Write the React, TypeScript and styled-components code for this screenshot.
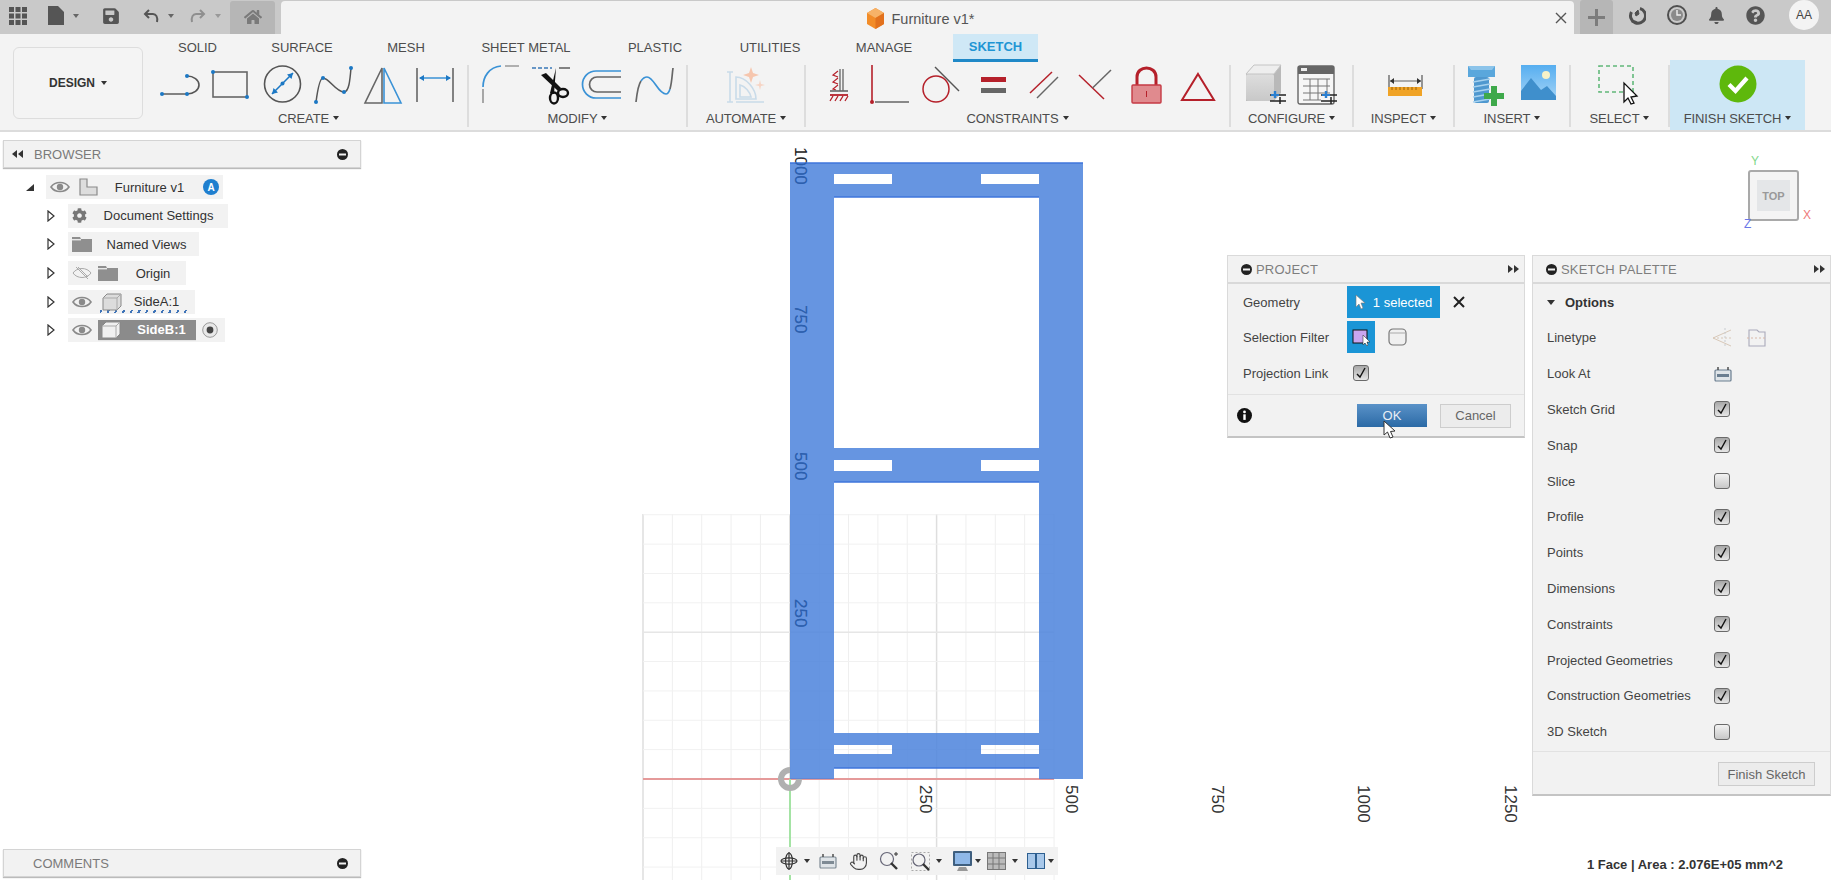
import React from "react";
import styled, { createGlobalStyle } from "styled-components";
import { FaBell, FaCog, FaHome, FaQuestionCircle, FaSave } from "react-icons/fa";
import { Hand } from "lucide-react";

const Global = createGlobalStyle`
    html, body { margin: 0; padding: 0; background: #fff; }
    body { font-family: "Liberation Sans", Arial, sans-serif; color: #444; overflow: hidden; }
    * { box-sizing: border-box; }
`;

const Page = styled.div`
    width: 1831px;
    height: 880px;
    display: flex;
    flex-direction: column;
    overflow: hidden;
`;

/* ---------- title bar ---------- */

const TitleBar = styled.div`
    height: 34px;
    flex: none;
    display: flex;
    background: #c9c9c9;
`;

const QuickTools = styled.div`
    width: 281px;
    flex: none;
    display: flex;
    align-items: center;
    padding: 0 6px 3px 0;
    color: #555;
`;

const QuickSlot = styled.div<{ $w: number; $dim?: boolean }>`
    width: ${(p) => p.$w}px;
    flex: none;
    height: 100%;
    display: flex;
    align-items: center;
    justify-content: center;
    gap: 9px;
    color: ${(p) => (p.$dim ? "#8f8f8f" : "#555")};
`;

const HomeTab = styled.div`
    width: 45px;
    height: 33px;
    margin: 3px 0 0 6px;
    flex: none;
    display: flex;
    align-items: center;
    justify-content: center;
    background: #b6b6b6;
    color: #7a7a7a;
    font-size: 18px;
    border-radius: 3px 3px 0 0;
`;

const Caret = styled.span<{ $color?: string; $size?: number }>`
    display: inline-block;
    width: 0;
    height: 0;
    flex: none;
    border-left: ${(p) => p.$size ?? 3}px solid transparent;
    border-right: ${(p) => p.$size ?? 3}px solid transparent;
    border-top: ${(p) => (p.$size ?? 3) + 1}px solid ${(p) => p.$color ?? "#333"};
`;

const DocTab = styled.div`
    width: 1293px;
    flex: none;
    margin-top: 1px;
    display: flex;
    align-items: center;
    padding: 0 7px 0 5px;
    background: #f3f3f3;
    border-radius: 4px 4px 0 0;
`;

const DocTitle = styled.div`
    margin: 2px auto 0;
    display: flex;
    align-items: center;
    gap: 6px;
    font-size: 14.5px;
    color: #555;
`;

const CloseMark = styled.span`
    display: flex;
    color: #555;
`;

const PlusTab = styled.div`
    width: 33px;
    flex: none;
    margin-left: 6px;
    display: flex;
    align-items: center;
    justify-content: center;
    background: #b6b6b6;
    border-radius: 3px 3px 0 0;
`;

const UserTools = styled.div`
    flex: 1;
    display: flex;
    align-items: center;
    padding: 0 0 4px 15px;
    gap: 21px;
    color: #555;
`;

const Avatar = styled.div`
    width: 30px;
    height: 30px;
    margin-left: 3px;
    border-radius: 50%;
    background: #f3f3f3;
    display: flex;
    align-items: center;
    justify-content: center;
    font-size: 12px;
    color: #444;
`;

/* ---------- ribbon ---------- */

const Ribbon = styled.div`
    height: 98px;
    flex: none;
    display: flex;
    background: #f3f3f3;
    border-bottom: 2px solid #dcdcdc;
`;

const DesignColumn = styled.div`
    width: 145px;
    flex: none;
    padding: 13px 2px 0 13px;
`;

const DesignButton = styled.div`
    height: 72px;
    display: flex;
    align-items: center;
    justify-content: center;
    gap: 6px;
    padding-bottom: 1px;
    border: 1px solid #dddddd;
    border-radius: 6px;
    background: #f4f4f4;
    font-size: 12px;
    font-weight: bold;
    color: #333;
`;

const RibbonMain = styled.div`
    flex: 1;
    display: flex;
    flex-direction: column;
`;

const TabRow = styled.div`
    height: 28px;
    flex: none;
    display: flex;
`;

const RibbonTab = styled.div<{ $w: number; $active?: boolean }>`
    width: ${(p) => p.$w}px;
    flex: none;
    display: flex;
    align-items: center;
    justify-content: center;
    font-size: 13px;
    padding-bottom: ${(p) => (p.$active ? "0" : "1px")};
    color: ${(p) => (p.$active ? "#1e95d4" : "#4c4c4c")};
    font-weight: ${(p) => (p.$active ? "bold" : "normal")};
    background: ${(p) => (p.$active ? "#cfe8f6" : "transparent")};
    border-bottom: ${(p) => (p.$active ? "3px solid #1f88c7" : "none")};
    margin-left: ${(p) => (p.$active ? "9px" : "0")};
`;

const PanelRow = styled.div`
    flex: 1;
    display: flex;
    align-items: flex-start;
    padding-left: 5px;
`;

const Section = styled.div<{ $w: number; $finish?: boolean }>`
    width: ${(p) => p.$w}px;
    height: ${(p) => (p.$finish ? "70px" : "62px")};
    margin-top: ${(p) => (p.$finish ? "-2px" : "3px")};
    padding-top: ${(p) => (p.$finish ? "5px" : "0")};
    flex: none;
    display: flex;
    flex-direction: column;
    align-items: center;
    background: ${(p) => (p.$finish ? "#cde7f5" : "transparent")};
    border-right: ${(p) => (p.$finish ? "none" : "2px solid #dddddd")};
`;

const IconRow = styled.div`
    height: 40px;
    flex: none;
    display: flex;
    gap: 11px;
`;

const PanelLabel = styled.div`
    margin-top: 5px;
    height: 16px;
    display: flex;
    align-items: center;
    gap: 4px;
    font-size: 13px;
    letter-spacing: -0.1px;
    color: #4c4c4c;
`;

const ToolSvg = styled.svg.attrs({ viewBox: "0 0 40 40" })`
    width: 40px;
    height: 40px;
    flex: none;
    overflow: visible;
`;

/* ---------- workspace ---------- */

const Workspace = styled.div`
    flex: 1;
    position: relative;
    display: flex;
    justify-content: space-between;
    min-height: 0;
`;

const SketchCanvas = styled.svg`
    position: absolute;
    left: 0;
    top: 0;
    width: 1831px;
    height: 748px;
`;

const LeftColumn = styled.div`
    position: relative;
    width: 358px;
    margin-left: 3px;
    padding: 8px 0 3px;
    display: flex;
    flex-direction: column;
    justify-content: space-between;
`;

const SideBar = styled.div<{ $inset?: number }>`
    height: 28px;
    flex: none;
    display: flex;
    align-items: center;
    padding: 0 12px 0 ${(p) => p.$inset ?? 8}px;
    gap: 11px;
    background: #f2f2f2;
    border: 1px solid #d4d4d4;
    box-shadow: 0 1px 1px #bbbbbb;
    font-size: 13px;
    color: #7a7a7a;
`;

const SideBarTitle = styled.span`
    flex: 1;
`;

const Tree = styled.div`
    flex: 1;
    padding-top: 7px;
    display: flex;
    flex-direction: column;
    gap: 4.7px;
`;

const TreeRow = styled.div<{ $root?: boolean }>`
    height: 24px;
    display: flex;
    align-items: center;
    padding-left: ${(p) => (p.$root ? "23px" : "44px")};
    gap: ${(p) => (p.$root ? "11px" : "13px")};
`;

const TreeItem = styled.div<{ $w: number; $gap?: number }>`
    width: ${(p) => p.$w}px;
    height: 24px;
    flex: none;
    display: flex;
    align-items: center;
    gap: ${(p) => p.$gap ?? 6}px;
    padding: 0 4px;
    background: #f2f2f2;
`;

const TreeName = styled.span`
    flex: 1;
    text-align: center;
    font-size: 13px;
    color: #333;
    white-space: nowrap;
`;

const SketchedName = styled.span`
    flex: 1;
    display: flex;
    align-items: center;
    padding-left: 2px;
    height: 23px;
    background: repeating-linear-gradient(115deg, #3f74b8 0 2px, transparent 2px 7px) bottom / 100% 3px no-repeat;
`;

const ActiveName = styled.span`
    width: 98px;
    height: 21px;
    flex: none;
    display: flex;
    align-items: center;
    padding-left: 3px;
    background: #8b8b8b;
    border-bottom: 1px solid #e4e4e4;
    color: #fff;
    font-size: 13px;
    font-weight: bold;
    gap: 6px;
`;

const ActiveLabel = styled.span`
    flex: 1;
    text-align: center;
`;

const Badge = styled.span`
    width: 16px;
    height: 16px;
    flex: none;
    margin-left: 2px;
    border-radius: 50%;
    background: #1f7fcf;
    color: #fff;
    font-size: 10px;
    font-weight: bold;
    display: flex;
    align-items: center;
    justify-content: center;
`;

const RightGroup = styled.div`
    position: relative;
    display: flex;
    align-items: flex-start;
    gap: 7px;
    padding-top: 123px;
`;

const Panel = styled.div<{ $w: number }>`
    width: ${(p) => p.$w}px;
    background: #f2f2f2;
    border: 1px solid #dadada;
    border-bottom: 2px solid #c4c4c4;
`;

const PanelHead = styled.div`
    height: 28px;
    display: flex;
    align-items: center;
    gap: 4px;
    padding: 0 5px 0 13px;
    border-bottom: 2px solid #d9d9d9;
    font-size: 13px;
    color: #7e7e7e;
`;

const PanelTitle = styled.span`
    flex: 1;
    letter-spacing: 0.2px;
`;

const DialogBody = styled.div`
    padding: 1px 0 3px 15px;
    display: grid;
    grid-template-columns: 104px 1fr;
    grid-template-rows: 34px 36px 36px;
    align-items: center;
    border-bottom: 1px solid #e2e2e2;
    font-size: 13px;
    color: #444;
`;

const ControlLine = styled.div`
    display: flex;
    align-items: center;
    gap: 13px;
`;

const SelectedButton = styled.div`
    width: 93px;
    height: 32px;
    display: flex;
    align-items: center;
    justify-content: center;
    gap: 7px;
    background: #1b95d6;
    color: #fff;
    font-size: 13px;
`;

const FilterButton = styled.div`
    width: 28px;
    height: 32px;
    display: flex;
    align-items: center;
    justify-content: center;
    background: #1b95d6;
`;

const CheckSlot = styled.div`
    padding-left: 6px;
    display: flex;
`;

const CheckBox = styled.span<{ $on?: boolean }>`
    width: 16px;
    height: 16px;
    display: flex;
    align-items: center;
    justify-content: center;
    border: 1px solid #6a6a6a;
    border-radius: 3px;
    background: ${(p) =>
        p.$on ? "linear-gradient(#a8a8a8, #e6e6e6)" : "linear-gradient(#f2f2f2, #c8c8c8)"};
`;

const DialogFoot = styled.div`
    position: relative;
    height: 41px;
    display: flex;
    align-items: center;
    padding: 0 13px 0 9px;
`;

const OkButton = styled.div`
    width: 70px;
    height: 23px;
    margin-left: auto;
    display: flex;
    align-items: center;
    justify-content: center;
    background: linear-gradient(#5a92c8, #2b6aa6);
    color: #e8eef5;
    font-size: 13px;
`;

const PlainButton = styled.div<{ $w: number }>`
    width: ${(p) => p.$w}px;
    height: 24px;
    flex: none;
    display: flex;
    align-items: center;
    justify-content: center;
    background: #ececec;
    border: 1px solid #cdcdcd;
    color: #666;
    font-size: 13px;
`;

const CancelSpacer = styled.div`
    margin-left: 13px;
`;

const Pointer = styled.svg`
    position: absolute;
    left: 155px;
    top: 25px;
    width: 14px;
    height: 20px;
`;

const OptionHead = styled.div`
    height: 36px;
    display: flex;
    align-items: center;
    gap: 10px;
    padding-left: 14px;
    font-size: 13px;
    font-weight: bold;
    color: #333;
`;

const OptionRow = styled.div`
    height: 35.8px;
    display: grid;
    grid-template-columns: 167px 1fr;
    align-items: center;
    padding-left: 14px;
    font-size: 13px;
    color: #444;
`;

const IconPair = styled.div`
    display: flex;
    align-items: center;
    gap: 14px;
    margin-left: -2px;
`;

const PaletteFoot = styled.div`
    height: 43px;
    margin-top: 1px;
    display: flex;
    align-items: center;
    justify-content: flex-end;
    padding: 3px 15px 0 0;
    border-top: 1px solid #e2e2e2;
`;

const ViewCube = styled.div`
    position: absolute;
    left: 1748px;
    top: 38px;
    width: 51px;
    height: 51px;
    display: flex;
    align-items: center;
    justify-content: center;
    background: #f4f4f4;
    border: 2px solid #a9a9a9;
    border-radius: 3px;
`;

const CubeFace = styled.div`
    width: 33px;
    height: 31px;
    display: flex;
    align-items: center;
    justify-content: center;
    background: #e4e6e8;
    color: #999;
    font-size: 11px;
    font-weight: bold;
`;

const AxisLetter = styled.span<{ $color: string; $x: number; $y: number }>`
    position: absolute;
    left: ${(p) => p.$x}px;
    top: ${(p) => p.$y}px;
    color: ${(p) => p.$color};
    font-size: 12px;
    line-height: 12px;
`;

const NavBar = styled.div`
    position: absolute;
    left: 776px;
    top: 715px;
    width: 282px;
    height: 28px;
    display: flex;
    align-items: center;
    gap: 7px;
    padding-left: 4px;
    background: #f2f2f2;
`;

const NavItem = styled.div<{ $gap?: number; $inner?: number }>`
    display: flex;
    align-items: center;
    gap: ${(p) => p.$inner ?? 6}px;
    margin-right: ${(p) => p.$gap ?? 0}px;
    color: #555;
`;

const StatusText = styled.div`
    position: absolute;
    right: 48px;
    top: 725px;
    font-size: 13px;
    font-weight: bold;
    color: #333;
`;

/* ---------- small drawings ---------- */

const RED = "#b5202a";
const GREY = "#666";
const BLUE = "#1c78c4";

const Dot = ({ x, y }: { x: number; y: number }) => <circle cx={x} cy={y} r={2} fill={BLUE} />;

const LineArcTool = () => (
    <ToolSvg fill="none" strokeWidth={1.6}>
        <path d="M1 29H26" stroke={GREY} />
        <path d="M26 29A12 9 0 0 0 26 11" stroke="#555" />
        <Dot x={1} y={29} />
        <Dot x={26} y={29} />
        <Dot x={26} y={11} />
    </ToolSvg>
);
const RectTool = () => (
    <ToolSvg fill="none">
        <rect x={1} y={7} width={34} height={25} stroke={GREY} strokeWidth={1.6} />
        <Dot x={1} y={7} />
        <Dot x={35} y={32} />
    </ToolSvg>
);
const CircleTool = () => (
    <ToolSvg fill="none">
        <circle cx={19.5} cy={19} r={18} stroke="#555" strokeWidth={1.6} />
        <path d="M9 29L30 8" stroke={BLUE} strokeWidth={1.6} />
        <path d="M30 8l-6 1.5 4.5 4.5zM9 29l6-1.5-4.5-4.5z" fill={BLUE} />
        <Dot x={19.5} y={18.5} />
    </ToolSvg>
);
const SplineTool = () => (
    <ToolSvg fill="none">
        <path d="M2 37C4 22 6 13 9 13C15 13 22 27 30 27C35 27 36 15 37 3" stroke="#555" strokeWidth={1.5} />
        <Dot x={2} y={37} />
        <Dot x={9} y={13} />
        <Dot x={30} y={27} />
        <Dot x={37} y={3} />
    </ToolSvg>
);
const MirrorTool = () => (
    <ToolSvg fill="none" strokeWidth={1.6}>
        <path d="M17 3L0 38H17Z" stroke={GREY} />
        <path d="M19 3L36 38H19Z" stroke="#3a92d6" />
    </ToolSvg>
);
const DimensionTool = () => (
    <ToolSvg fill="none">
        <path d="M1 3V37M37 3V37" stroke={GREY} strokeWidth={1.6} />
        <path d="M4 13H34" stroke="#3a92d6" strokeWidth={1.5} />
        <path d="M3 13l5-3v6zM35 13l-5-3v6z" fill={BLUE} />
    </ToolSvg>
);
const FilletTool = () => (
    <ToolSvg fill="none" strokeWidth={1.7}>
        <path d="M2 38V24M24 1H38" stroke="#999" />
        <path d="M2 22C2 12 8 2 20 1" stroke="#3a92d6" />
    </ToolSvg>
);
const ScissorsTool = () => (
    <ToolSvg fill="none">
        <path d="M0 3H20" stroke="#3a78b8" strokeWidth={1.6} strokeDasharray="4 2" />
        <path d="M27 3H38" stroke={GREY} strokeWidth={1.6} />
        <path d="M24 3L18 28L22 29Z" fill="#111" />
        <path d="M9 10L26 26L29 23L14 8Z" fill="#111" />
        <ellipse cx={22} cy={33} rx={4} ry={5.5} stroke="#111" strokeWidth={2.4} />
        <ellipse cx={31} cy={28} rx={5} ry={4} stroke="#111" strokeWidth={2.4} />
    </ToolSvg>
);
const OffsetTool = () => (
    <ToolSvg fill="none" strokeWidth={1.7}>
        <path d="M38 6H13a13.5 13.5 0 0 0 0 27H38" stroke="#3a92d6" />
        <path d="M38 12H14a7.5 7.5 0 0 0 0 15H38" stroke={GREY} />
    </ToolSvg>
);
const SplineEditTool = () => (
    <ToolSvg fill="none" strokeWidth={1.7}>
        <path d="M2 37C3 28 4 20 7 16" stroke={GREY} />
        <path d="M7 16C9 13 11 12 13 12C20 12 24 29 32 29C34 29 35 27 36 24" stroke="#3a92d6" />
        <path d="M36 24C38 17 38 10 39 3" stroke={GREY} />
    </ToolSvg>
);
const AutomateTool = () => (
    <ToolSvg fill="none" stroke="#c9dbe9" strokeWidth={1.6}>
        <path d="M4 7V37M1 7H7M1 37H7M10 37H38M10 12V34H30C30 24 20 12 10 12Z" />
        <path d="M14 32V20C19 21 24 27 25 32Z" />
        <path d="M25 2l2 6 6 2-6 2-2 6-2-6-6-2 6-2z" fill="#f6c6ae" stroke="none" />
        <path d="M34 15l1 4 4 1-4 1-1 4-1-4-4-1 4-1z" fill="#f6d4c4" stroke="none" />
    </ToolSvg>
);
const FixTool = () => (
    <ToolSvg fill="none">
        <path d="M24 4V26M21 4V26" stroke={GREY} strokeWidth={1.3} />
        <path d="M19 6l-5 4 5 2M19 13l-5 4 5 2M19 20l-5 4 3 1" stroke={RED} strokeWidth={1.2} />
        <path d="M11 26H29" stroke={GREY} strokeWidth={1.6} />
        <path d="M11 30H29" stroke={RED} strokeWidth={1.8} />
        <path d="M14 31l-3 5M19 31l-3 5M24 31l-3 5M29 31l-3 5" stroke={RED} strokeWidth={1.3} />
    </ToolSvg>
);
const PerpendicularTool = () => (
    <ToolSvg fill="none">
        <path d="M2 0V37" stroke={RED} strokeWidth={1.6} />
        <path d="M5 37H39" stroke="#888" strokeWidth={2} />
        <circle cx={2} cy={37} r={2} fill={RED} />
    </ToolSvg>
);
const TangentTool = () => (
    <ToolSvg fill="none">
        <circle cx={15} cy={24} r={13} stroke={RED} strokeWidth={1.5} />
        <path d="M14 2L38 26" stroke="#555" strokeWidth={1.4} />
    </ToolSvg>
);
const EqualTool = () => (
    <ToolSvg>
        <rect x={9} y={12} width={25} height={5} fill={RED} />
        <rect x={9} y={23} width={25} height={5} fill="#666" />
    </ToolSvg>
);
const ParallelTool = () => (
    <ToolSvg fill="none" strokeWidth={1.5}>
        <path d="M7 28L29 7" stroke={RED} />
        <path d="M14 33L35 12" stroke="#666" />
    </ToolSvg>
);
const CrossTool = () => (
    <ToolSvg fill="none" strokeWidth={1.5}>
        <path d="M5 10L30 34" stroke={RED} />
        <path d="M18.5 23L37 5" stroke="#666" />
    </ToolSvg>
);
const LockTool = () => (
    <ToolSvg fill="none">
        <path d="M12 20V12C12 0 31 0 31 12V20" stroke={RED} strokeWidth={3} />
        <rect x={7} y={20} width={29} height={18} rx={1} fill="#e08a8e" stroke="#c53a44" strokeWidth={1.4} />
        <path d="M21.5 26V32" stroke={RED} strokeWidth={1} />
    </ToolSvg>
);
const TriangleTool = () => (
    <ToolSvg fill="none">
        <path d="M22 9L38 35H6Z" stroke={RED} strokeWidth={2} />
    </ToolSvg>
);
const Sliders = () => (
    <g fill="none">
        <path d="M24 30H40" stroke="#222" strokeWidth={1.5} />
        <path d="M24 36H40" stroke="#222" strokeWidth={1.5} />
        <path d="M29 26V33" stroke="#2a7fd0" strokeWidth={2.4} />
        <path d="M25 30H33" stroke="#2a7fd0" strokeWidth={2} />
        <path d="M34 32V39" stroke="#222" strokeWidth={1.5} />
    </g>
);
const CubeTool = () => (
    <ToolSvg>
        <defs>
            <linearGradient id="cubeFront" x1="0" y1="0" x2="0" y2="1">
                <stop offset="0" stopColor="#dedede" />
                <stop offset="1" stopColor="#c8c8c8" />
            </linearGradient>
        </defs>
        <path d="M0 9L8 0H35V28L28 36H0Z" fill="#b9b9b9" />
        <rect x={0} y={9} width={28} height={27} rx={2} fill="url(#cubeFront)" />
        <path d="M0 9L8 0H35L28 9Z" fill="#eeeeee" stroke="#c4c4c4" />
        <Sliders />
    </ToolSvg>
);
const TableTool = () => (
    <ToolSvg fill="none">
        <rect x={1} y={1} width={36} height={38} rx={2} fill="#f6f6f6" stroke="#666" strokeWidth={1.4} />
        <rect x={1} y={1} width={36} height={8} fill="#666" />
        <rect x={4} y={3} width={6} height={3} fill="#eee" />
        <path d="M6 14H33M6 21H33M6 28H33M6 35H24M13 14V35M21 14V35M30 14V28" stroke="#777" strokeWidth={1} />
        <Sliders />
    </ToolSvg>
);
const InspectTool = () => (
    <ToolSvg fill="none">
        <path d="M5 10V24M38 10V24" stroke="#555" strokeWidth={1.2} />
        <path d="M6 16H37" stroke="#888" strokeWidth={1.4} />
        <path d="M6 16l4-3v6zM37 16l-4-3v6z" fill="#333" />
        <rect x={4} y={22} width={34} height={9} fill="#f0a326" />
        <path d="M8 22v3M12 22v3M16 22v3M20 22v3M24 22v3M28 22v3M32 22v3" stroke="#925c00" strokeWidth={0.9} />
    </ToolSvg>
);
const BoltTool = () => (
    <ToolSvg>
        <path d="M1 1H28V12H1Z" fill="#5aa7dc" />
        <path d="M1 1H28L25 5H4Z" fill="#8cc4ea" />
        <rect x={7} y={12} width={15} height={26} rx={2} fill="#4f98cf" />
        <path d="M6 17L23 14M6 22L23 19M6 27L23 24M6 32L23 29M6 37L23 34" stroke="#a7d2ef" strokeWidth={1.4} />
        <path d="M24 21h6v7h7v6h-7v7h-6v-7h-7v-6h7z" fill="#3ea94a" />
    </ToolSvg>
);
const PictureTool = () => (
    <ToolSvg>
        <defs>
            <linearGradient id="sky" x1="0" y1="0" x2="0" y2="1">
                <stop offset="0" stopColor="#56aef0" />
                <stop offset="1" stopColor="#a5d4f6" />
            </linearGradient>
        </defs>
        <rect x={3} y={0} width={35} height={35} fill="url(#sky)" />
        <circle cx={28} cy={10} r={4} fill="#f6f2c8" />
        <path d="M3 35V26L13 13L23 25L29 21L38 31V35Z" fill="#3f8fcc" />
    </ToolSvg>
);
const SelectTool = () => (
    <ToolSvg fill="none">
        <rect x={-1} y={1} width={34} height={26} stroke="#62b87a" strokeWidth={1.6} strokeDasharray="4 3" />
        <path d="M24 18V37L28 33L31 39L34 38L31 32L37 31Z" fill="#fff" stroke="#111" strokeWidth={1.3} />
    </ToolSvg>
);
const FinishTool = () => (
    <ToolSvg fill="none">
        <circle cx={20} cy={19} r={18.5} fill="#5eb80c" />
        <path d="M11 19.5L17.5 26L29 13" stroke="#fff" strokeWidth={4.2} />
    </ToolSvg>
);

const Eye = ({ off }: { off?: boolean }) => (
    <svg width={20} height={14} viewBox="0 0 20 14" fill="none" style={{ flex: "none" }}>
        <path d="M1 7C5 1 15 1 19 7C15 13 5 13 1 7Z" stroke={off ? "#aaa" : "#8a8a8a"} strokeWidth={off ? 1 : 1.6} />
        {off ? (
            <path d="M4 1L16 13M6 1l10 10" stroke="#aaa" strokeWidth={1} />
        ) : (
            <circle cx={10} cy={7} r={3.2} fill="#8a8a8a" />
        )}
    </svg>
);
const Folder = () => (
    <svg width={20} height={15} viewBox="0 0 20 15" style={{ flex: "none" }}>
        <path d="M0 0H8L9 2H20V15H0Z" fill="#8f8f8f" />
        <rect x={0} y={2} width={9} height={1.4} fill="#e8e8e8" />
    </svg>
);
const Body = ({ light }: { light?: boolean }) => (
    <svg width={20} height={18} viewBox="0 0 20 18" style={{ flex: "none" }}>
        <path d="M1 5L5 1H19V13L15 17H1Z" fill={light ? "#f0f0f0" : "#dcdcdc"} stroke="#888" strokeWidth={1} />
        <path d="M1 5H15V17M15 5L19 1" fill="none" stroke="#aaa" strokeWidth={1} />
    </svg>
);
const DocIcon = () => (
    <svg width={19} height={18} viewBox="0 0 19 18" style={{ flex: "none" }}>
        <path d="M1 1H8V9H18V17H1Z" fill="#dddddd" stroke="#8a8a8a" strokeWidth={1.2} />
    </svg>
);
const Chevron = ({ down }: { down?: boolean }) =>
    down ? (
        <svg width={9} height={9} viewBox="0 0 9 9" style={{ flex: "none" }}>
            <path d="M0 8L8 1V8Z" fill="#333" />
        </svg>
    ) : (
        <svg width={8} height={12} viewBox="0 0 8 12" style={{ flex: "none" }}>
            <path d="M1 1L7 6L1 11Z" fill="#fff" stroke="#333" strokeWidth={1.2} />
        </svg>
    );
const RadioDot = () => (
    <svg width={16} height={16} viewBox="0 0 16 16" style={{ flex: "none" }}>
        <circle cx={8} cy={8} r={7.3} fill="#e8e8e8" stroke="#999" />
        <circle cx={8} cy={8} r={3.4} fill="#444" />
    </svg>
);
const MinusDot = () => (
    <svg width={11} height={11} viewBox="0 0 11 11" style={{ flex: "none" }}>
        <circle cx={5.5} cy={5.5} r={5.5} fill="#222" />
        <rect x={2} y={4.5} width={7} height={2} fill="#f2f2f2" />
    </svg>
);
const DoubleArrow = ({ left }: { left?: boolean }) => (
    <svg width={11} height={8} viewBox="0 0 11 8" style={{ flex: "none" }}>
        <path d={left ? "M5 0V8L0 4ZM11 0V8L6 4Z" : "M0 0V8L5 4ZM6 0V8L11 4Z"} fill="#333" />
    </svg>
);
const Tick = () => (
    <svg width={12} height={12} viewBox="0 0 12 12" fill="none">
        <path d="M2 7L5 10L10 1" stroke="#111" strokeWidth={1.4} />
    </svg>
);
const Check = ({ on }: { on?: boolean }) => <CheckBox $on={on}>{on && <Tick />}</CheckBox>;

const InfoDot = () => (
    <svg width={15} height={15} viewBox="0 0 15 15" style={{ flex: "none" }}>
        <circle cx={7.5} cy={7.5} r={7.5} fill="#111" />
        <rect x={6.3} y={6.3} width={2.4} height={5.6} fill="#fff" />
        <circle cx={7.5} cy={3.9} r={1.4} fill="#fff" />
    </svg>
);
const WhiteCursor = () => (
    <svg width={11} height={15} viewBox="0 0 11 15" style={{ flex: "none" }}>
        <path d="M1 0V12L4 9L6 14L8 13L6 8L10 8Z" fill="#fff" stroke="#777" strokeWidth={0.6} />
    </svg>
);
const LookAtIcon = ({ color = "#7e8a94" }: { color?: string }) => (
    <svg width={18} height={16} viewBox="0 0 18 16" fill="none" style={{ flex: "none" }}>
        <rect x={1} y={4} width={16} height={11} rx={1} fill="#dfe4e8" stroke={color} strokeWidth={1.2} />
        <rect x={3} y={8} width={12} height={3} fill={color} />
        <path d="M4 1V4M14 1V4" stroke="#444" strokeWidth={1.4} />
    </svg>
);

function buildGrid() {
    const lines: React.ReactElement[] = [];
    for (let i = 0; i <= 14; i++) {
        const x = 643 + i * 29.36;
        const major = i % 5 === 0;
        lines.push(<line key={"v" + i} x1={x} y1={514} x2={x} y2={880} stroke={major ? "#dedede" : "#efefef"} strokeWidth={major ? 1.5 : 1} />);
    }
    for (let k = -3; k <= 9; k++) {
        const y = 779 - k * 29.36;
        const major = k % 5 === 0;
        lines.push(<line key={"h" + k} x1={643} y1={y} x2={1054} y2={y} stroke={major ? "#e6e6e6" : "#f1f1f1"} strokeWidth={major ? 1.5 : 1} />);
    }
    return lines;
}

const slot = (x: number, y: number, w: number, h: number) => `M${x} ${y}H${x + w}V${y + h}H${x}Z`;

const SHAPE = [
    slot(790, 163, 293, 616),
    slot(834, 174, 58, 10),
    slot(981, 174, 58, 10),
    slot(834, 197, 205, 251),
    slot(834, 460, 58, 11),
    slot(981, 460, 58, 11),
    slot(834, 482, 205, 251),
    slot(834, 745, 58, 9),
    slot(981, 745, 58, 9),
    slot(834, 768, 205, 11),
].join("");

const axisX = [
    { t: "250", x: 927 },
    { t: "500", x: 1073 },
    { t: "750", x: 1219 },
    { t: "1000", x: 1365 },
    { t: "1250", x: 1512 },
];
const axisY = [
    { t: "1000", y: 147 },
    { t: "750", y: 305 },
    { t: "500", y: 452 },
    { t: "250", y: 599 },
];

const Sketch = () => (
    <SketchCanvas viewBox="0 132 1831 748">
        <defs>
            <clipPath id="onShape">
                <rect x={790} y={163} width={293} height={616} />
            </clipPath>
        </defs>
        {buildGrid()}
        <line x1={643} y1={779} x2={1054} y2={779} stroke="#e59a9a" strokeWidth={2} />
        <line x1={790} y1={779} x2={790} y2={880} stroke="#a4e3a4" strokeWidth={2} />
        {axisY.map((a) => (
            <text key={a.t} transform={`translate(795 ${a.y}) rotate(90)`} fontFamily="Liberation Sans" fontSize={17} fill="#222">
                {a.t}
            </text>
        ))}
        {axisX.map((a) => (
            <text key={a.t} transform={`translate(${a.x - 7} 785) rotate(90)`} fontFamily="Liberation Sans" fontSize={17} fill="#333">
                {a.t}
            </text>
        ))}
        <path d={SHAPE} fillRule="evenodd" fill="#4d84dc" fillOpacity={0.86} />
        <path d="M790 163H1083M834 197H1039M834 482H1039M834 768H1039" stroke="#3f76dc" strokeWidth={1.4} fill="none" />
        <g clipPath="url(#onShape)">
            {axisY.map((a) => (
                <text key={a.t} transform={`translate(795 ${a.y}) rotate(90)`} fontFamily="Liberation Sans" fontSize={17} fill="#2c5fae">
                    {a.t}
                </text>
            ))}
        </g>
        <path d="M790 770A9 9 0 1 0 799 779" fill="none" stroke="#b0b0b0" strokeWidth={6} />
    </SketchCanvas>
);

const ribbonTabs = [
    { t: "SOLID", w: 105 },
    { t: "SURFACE", w: 104 },
    { t: "MESH", w: 104 },
    { t: "SHEET METAL", w: 136 },
    { t: "PLASTIC", w: 122 },
    { t: "UTILITIES", w: 108 },
    { t: "MANAGE", w: 120 },
];

const options: { label: string; on: boolean }[] = [
    { label: "Sketch Grid", on: true },
    { label: "Snap", on: true },
    { label: "Slice", on: false },
    { label: "Profile", on: true },
    { label: "Points", on: true },
    { label: "Dimensions", on: true },
    { label: "Constraints", on: true },
    { label: "Projected Geometries", on: true },
    { label: "Construction Geometries", on: true },
    { label: "3D Sketch", on: false },
];

export default function App() {
    return (
        <Page>
            <Global />
            <TitleBar>
                <QuickTools>
                    <QuickSlot $w={36}>
                        <svg width={18} height={18} viewBox="0 0 18 18" fill="#555">
                            {[0, 6.5, 13].map((x) =>
                                [0, 6.5, 13].map((y) => <rect key={x + "-" + y} x={x} y={y} width={5} height={5} />)
                            )}
                        </svg>
                    </QuickSlot>
                    <QuickSlot $w={55}>
                        <svg width={16} height={19} viewBox="0 0 16 19" fill="#555">
                            <path d="M0 0H10L16 6V19H0Z" />
                        </svg>
                        <Caret $color="#666" />
                    </QuickSlot>
                    <QuickSlot $w={40}>
                        <FaSave size={18} />
                    </QuickSlot>
                    <QuickSlot $w={55}>
                        <svg width={16} height={16} viewBox="0 0 16 16" fill="none" stroke="#555" strokeWidth={2}>
                            <path d="M6 2L2 6L6 10M2 6H10C13 6 15 9 14 14" />
                        </svg>
                        <Caret $color="#666" />
                    </QuickSlot>
                    <QuickSlot $w={38} $dim>
                        <svg width={16} height={16} viewBox="0 0 16 16" fill="none" stroke="#8f8f8f" strokeWidth={2}>
                            <path d="M10 2L14 6L10 10M14 6H6C3 6 1 9 2 14" />
                        </svg>
                        <Caret $color="#999" />
                    </QuickSlot>
                    <HomeTab>
                        <FaHome />
                    </HomeTab>
                </QuickTools>
                <DocTab>
                    <DocTitle>
                        <svg width={19} height={21} viewBox="0 0 19 21">
                            <path d="M9.5 0L18 5V16L9.5 21L1 16V5Z" fill="#f28c28" />
                            <path d="M9.5 0L18 5L9.5 10L1 5Z" fill="#f7b267" />
                            <path d="M9.5 10L18 5V16L9.5 21Z" fill="#e2711d" />
                        </svg>
                        Furniture v1*
                    </DocTitle>
                    <CloseMark>
                        <svg width={12} height={12} viewBox="0 0 12 12" stroke="#555" strokeWidth={1.4}>
                            <path d="M1 1L11 11M11 1L1 11" />
                        </svg>
                    </CloseMark>
                </DocTab>
                <PlusTab>
                    <svg width={17} height={17} viewBox="0 0 17 17" fill="#7c7c7c">
                        <path d="M7 0H10V7H17V10H10V17H7V10H0V7H7Z" />
                    </svg>
                </PlusTab>
                <UserTools>
                    <svg width={18} height={19} viewBox="0 0 18 19" fill="none" stroke="#4f4f4f" strokeWidth={3}>
                        <path d="M12 2.5A7.5 7.5 0 1 1 3.5 6M4 15L9 17" />
                        <path d="M7 7l3-3 1 4-3 2z" fill="#4f4f4f" strokeWidth={1} />
                    </svg>
                    <svg width={20} height={20} viewBox="0 0 20 20" fill="none" stroke="#4f4f4f">
                        <circle cx={10} cy={10} r={9} strokeWidth={2} />
                        <circle cx={10} cy={10} r={6} fill="#8a8a8a" stroke="none" />
                        <path d="M10 5V10H14" stroke="#eee" strokeWidth={1.4} />
                    </svg>
                    <FaBell size={17} />
                    <FaQuestionCircle size={19} />
                    <Avatar>AA</Avatar>
                </UserTools>
            </TitleBar>

            <Ribbon>
                <DesignColumn>
                    <DesignButton>
                        DESIGN <Caret />
                    </DesignButton>
                </DesignColumn>
                <RibbonMain>
                    <TabRow>
                        {ribbonTabs.map((tab) => (
                            <RibbonTab key={tab.t} $w={tab.w}>
                                {tab.t}
                            </RibbonTab>
                        ))}
                        <RibbonTab $w={85} $active>
                            SKETCH
                        </RibbonTab>
                    </TabRow>
                    <PanelRow>
                        <Section $w={319}>
                            <IconRow>
                                <LineArcTool />
                                <RectTool />
                                <CircleTool />
                                <SplineTool />
                                <MirrorTool />
                                <DimensionTool />
                            </IconRow>
                            <PanelLabel>
                                CREATE <Caret />
                            </PanelLabel>
                        </Section>
                        <Section $w={219}>
                            <IconRow>
                                <FilletTool />
                                <ScissorsTool />
                                <OffsetTool />
                                <SplineEditTool />
                            </IconRow>
                            <PanelLabel>
                                MODIFY <Caret />
                            </PanelLabel>
                        </Section>
                        <Section $w={118}>
                            <IconRow>
                                <AutomateTool />
                            </IconRow>
                            <PanelLabel>
                                AUTOMATE <Caret />
                            </PanelLabel>
                        </Section>
                        <Section $w={425}>
                            <IconRow>
                                <FixTool />
                                <PerpendicularTool />
                                <TangentTool />
                                <EqualTool />
                                <ParallelTool />
                                <CrossTool />
                                <LockTool />
                                <TriangleTool />
                            </IconRow>
                            <PanelLabel>
                                CONSTRAINTS <Caret />
                            </PanelLabel>
                        </Section>
                        <Section $w={123}>
                            <IconRow>
                                <CubeTool />
                                <TableTool />
                            </IconRow>
                            <PanelLabel>
                                CONFIGURE <Caret />
                            </PanelLabel>
                        </Section>
                        <Section $w={101}>
                            <IconRow>
                                <InspectTool />
                            </IconRow>
                            <PanelLabel>
                                INSPECT <Caret />
                            </PanelLabel>
                        </Section>
                        <Section $w={116}>
                            <IconRow>
                                <BoltTool />
                                <PictureTool />
                            </IconRow>
                            <PanelLabel>
                                INSERT <Caret />
                            </PanelLabel>
                        </Section>
                        <Section $w={99}>
                            <IconRow>
                                <SelectTool />
                            </IconRow>
                            <PanelLabel>
                                SELECT <Caret />
                            </PanelLabel>
                        </Section>
                        <Section $w={135} $finish>
                            <IconRow>
                                <FinishTool />
                            </IconRow>
                            <PanelLabel>
                                FINISH SKETCH <Caret />
                            </PanelLabel>
                        </Section>
                    </PanelRow>
                </RibbonMain>
            </Ribbon>

            <Workspace>
                <Sketch />

                <LeftColumn>
                    <SideBar>
                        <DoubleArrow left />
                        <SideBarTitle>BROWSER</SideBarTitle>
                        <MinusDot />
                    </SideBar>
                    <Tree>
                        <TreeRow $root>
                            <Chevron down />
                            <TreeItem $w={177} $gap={9}>
                                <Eye />
                                <DocIcon />
                                <TreeName>Furniture v1</TreeName>
                                <Badge>A</Badge>
                            </TreeItem>
                        </TreeRow>
                        <TreeRow>
                            <Chevron />
                            <TreeItem $w={160}>
                                <FaCog size={15} color="#777" />
                                <TreeName>Document Settings</TreeName>
                            </TreeItem>
                        </TreeRow>
                        <TreeRow>
                            <Chevron />
                            <TreeItem $w={131}>
                                <Folder />
                                <TreeName>Named Views</TreeName>
                            </TreeItem>
                        </TreeRow>
                        <TreeRow>
                            <Chevron />
                            <TreeItem $w={118}>
                                <Eye off />
                                <Folder />
                                <TreeName>Origin</TreeName>
                            </TreeItem>
                        </TreeRow>
                        <TreeRow>
                            <Chevron />
                            <TreeItem $w={127} $gap={8}>
                                <Eye />
                                <SketchedName>
                                    <Body />
                                    <TreeName>SideA:1</TreeName>
                                </SketchedName>
                            </TreeItem>
                        </TreeRow>
                        <TreeRow>
                            <Chevron />
                            <TreeItem $w={157}>
                                <Eye />
                                <ActiveName>
                                    <Body light />
                                    <ActiveLabel>SideB:1</ActiveLabel>
                                </ActiveName>
                                <RadioDot />
                            </TreeItem>
                        </TreeRow>
                    </Tree>
                    <SideBar $inset={29}>
                        <SideBarTitle>COMMENTS</SideBarTitle>
                        <MinusDot />
                    </SideBar>
                </LeftColumn>

                <ViewCube>
                    <CubeFace>TOP</CubeFace>
                    <AxisLetter $color="#7fd88a" $x={1} $y={-17}>
                        Y
                    </AxisLetter>
                    <AxisLetter $color="#ee7a7a" $x={53} $y={37}>
                        X
                    </AxisLetter>
                    <AxisLetter $color="#6a78e8" $x={-6} $y={46}>
                        Z
                    </AxisLetter>
                </ViewCube>

                <NavBar>
                    <NavItem $gap={2}>
                        <svg width={18} height={20} viewBox="0 0 18 20" fill="none" stroke="#333" strokeWidth={1.2}>
                            <path d="M9 1V19M1 10H17" />
                            <ellipse cx={9} cy={10} rx={3.4} ry={8} />
                            <ellipse cx={9} cy={10} rx={8} ry={3.2} />
                        </svg>
                        <Caret />
                    </NavItem>
                    <NavItem $gap={5}>
                        <LookAtIcon />
                    </NavItem>
                    <NavItem $gap={4}>
                        <Hand size={19} strokeWidth={1.4} color="#444" />
                    </NavItem>
                    <NavItem $gap={5}>
                        <svg width={20} height={20} viewBox="0 0 20 20" fill="none">
                            <circle cx={8} cy={8} r={6.5} stroke="#667" strokeWidth={1.2} />
                            <path d="M12 12L18 18" stroke="#333" strokeWidth={2.4} />
                            <path d="M17 1V5M15 3H19" stroke="#333" strokeWidth={1} />
                        </svg>
                    </NavItem>
                    <NavItem $gap={4}>
                        <svg width={19} height={19} viewBox="0 0 19 19" fill="none">
                            <rect x={0.5} y={0.5} width={18} height={18} stroke="#aaa" strokeDasharray="2 2" />
                            <circle cx={8} cy={8} r={6} stroke="#667" strokeWidth={1.2} />
                            <path d="M12 12L18 18" stroke="#333" strokeWidth={2.4} />
                        </svg>
                        <Caret />
                    </NavItem>
                    <NavItem $gap={-1} $inner={3}>
                        <svg width={19} height={20} viewBox="0 0 19 20">
                            <rect x={0} y={0} width={19} height={15} rx={1} fill="#3f5f7f" />
                            <rect x={2} y={2} width={15} height={11} fill="#8fb8e8" />
                            <path d="M6 16H13L15 20H4Z" fill="#999" />
                        </svg>
                        <Caret />
                    </NavItem>
                    <NavItem $gap={2}>
                        <svg width={19} height={18} viewBox="0 0 19 18" stroke="#777" fill="#bbb">
                            <rect x={0.5} y={0.5} width={18} height={17} />
                            <path d="M0 6H19M0 12H19M6 0V18M12 0V18" fill="none" />
                        </svg>
                        <Caret />
                    </NavItem>
                    <NavItem $inner={3}>
                        <svg width={18} height={16} viewBox="0 0 18 16" stroke="#2d5f90" fill="#a8c8ea">
                            <rect x={0.5} y={0.5} width={8} height={15} />
                            <rect x={9.5} y={0.5} width={8} height={15} />
                        </svg>
                        <Caret />
                    </NavItem>
                </NavBar>

                <StatusText>1 Face | Area : 2.076E+05 mm^2</StatusText>

                <RightGroup>
                    <Panel $w={298}>
                        <PanelHead>
                            <MinusDot />
                            <PanelTitle>PROJECT</PanelTitle>
                            <DoubleArrow />
                        </PanelHead>
                        <DialogBody>
                            <span>Geometry</span>
                            <ControlLine>
                                <SelectedButton>
                                    <WhiteCursor />1 selected
                                </SelectedButton>
                                <svg width={12} height={12} viewBox="0 0 12 12" stroke="#222" strokeWidth={2}>
                                    <path d="M1 1L11 11M11 1L1 11" />
                                </svg>
                            </ControlLine>
                            <span>Selection Filter</span>
                            <ControlLine>
                                <FilterButton>
                                    <svg width={18} height={18} viewBox="0 0 18 18">
                                        <rect x={1} y={2} width={14} height={13} fill="#c8a6f0" stroke="#111" strokeWidth={1} />
                                        <path d="M11 7V17L13 15L15 18L16 17L15 14H18Z" fill="#fff" stroke="#222" strokeWidth={0.5} />
                                    </svg>
                                </FilterButton>
                                <svg width={19} height={18} viewBox="0 0 19 18">
                                    <rect x={1} y={1} width={17} height={16} rx={4} fill="#f0f0f0" stroke="#777" strokeWidth={1.2} />
                                    <path d="M1.5 5H17.5" stroke="#aaa" strokeWidth={1} />
                                </svg>
                            </ControlLine>
                            <span>Projection Link</span>
                            <CheckSlot>
                                <Check on />
                            </CheckSlot>
                        </DialogBody>
                        <DialogFoot>
                            <InfoDot />
                            <OkButton>OK</OkButton>
                            <CancelSpacer>
                                <PlainButton $w={71}>Cancel</PlainButton>
                            </CancelSpacer>
                            <Pointer viewBox="0 0 14 20">
                                <path d="M1 1V15L4.5 12L7 18L10 17L7.5 11.5L12 11Z" fill="#fff" stroke="#333" strokeWidth={1} />
                            </Pointer>
                        </DialogFoot>
                    </Panel>
                    <Panel $w={299}>
                        <PanelHead>
                            <MinusDot />
                            <PanelTitle>SKETCH PALETTE</PanelTitle>
                            <DoubleArrow />
                        </PanelHead>
                        <OptionHead>
                            <Caret $size={4} />
                            Options
                        </OptionHead>
                        <OptionRow>
                            <span>Linetype</span>
                            <IconPair>
                                <svg width={20} height={20} viewBox="0 0 20 20" fill="none" stroke="#d8c8b8" strokeWidth={1}>
                                    <path d="M19 2L1 10L19 18" />
                                    <path d="M1 10H19" strokeDasharray="2 2" />
                                    <path d="M13 0V20" strokeDasharray="2 2" stroke="#c8ccd0" />
                                </svg>
                                <svg width={20} height={20} viewBox="0 0 20 20" fill="none" stroke="#aab" strokeWidth={1.1}>
                                    <path d="M3 2H11L13 4H19V18H3Z" />
                                    <path d="M1 10H19" strokeDasharray="2 2" stroke="#d8b8a8" />
                                </svg>
                            </IconPair>
                        </OptionRow>
                        <OptionRow>
                            <span>Look At</span>
                            <LookAtIcon color="#6a7e90" />
                        </OptionRow>
                        {options.map((o) => (
                            <OptionRow key={o.label}>
                                <span>{o.label}</span>
                                <Check on={o.on} />
                            </OptionRow>
                        ))}
                        <PaletteFoot>
                            <PlainButton $w={97}>Finish Sketch</PlainButton>
                        </PaletteFoot>
                    </Panel>
                </RightGroup>
            </Workspace>
        </Page>
    );
}
